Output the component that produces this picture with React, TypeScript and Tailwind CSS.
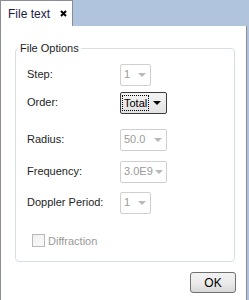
import React from 'react';

const font = { fontFamily: '"Liberation Sans", Arial, sans-serif' };

type ComboProps = {
  value: string;
  width: string;
  disabled?: boolean;
};

const Combo = ({ value, width, disabled }: ComboProps) => {
  if (disabled) {
    return (
      <div
        className={`${width} h-[22px] flex items-center justify-between pl-[3px] pr-[4px] border border-[#d0d0d0] bg-white text-[#9a9a9a] rounded-[2px]`}
      >
        <span>{value}</span>
        <svg width="8" height="4" viewBox="0 0 8 4" className="shrink-0 ml-[2px]">
          <path d="M0 0 H8 L4 4 Z" fill="#b8b8b8" />
        </svg>
      </div>
    );
  }
  return (
    <div
      className={`${width} h-[22px] flex items-center justify-between pl-[2px] pr-[5px] border border-[#3c3c3c] bg-gradient-to-b from-[#f4f4f4] to-[#e2e2e2] text-black rounded-[2px]`}
    >
      <span className="outline outline-1 outline-dotted outline-black leading-[14px] px-[1px]">{value}</span>
      <svg width="8" height="4" viewBox="0 0 8 4" className="shrink-0">
        <path d="M0 0 H8 L4 4 Z" fill="#000" />
      </svg>
    </div>
  );
};

const Row = ({ label, children, className }: { label: string; children: React.ReactNode; className?: string }) => (
  <div className={`flex items-center ${className ?? ''}`}>
    <span className="w-[93px] text-[#1e1e1e] whitespace-nowrap">{label}</span>
    {children}
  </div>
);

export default function App() {
  return (
    <div className="w-[249px] h-[300px] bg-[#b0c4de] text-[11px] relative overflow-hidden" style={font}>
      {/* tab strip */}
      <div className="h-[26px] flex items-end">
        <div className="w-[73px] h-[26px] bg-white border-l border-t border-r border-[#8c8c96] flex items-center pl-[7px] gap-[10px] text-[#1a1a46] text-[12px] whitespace-nowrap">
          <span>File text</span>
          <svg width="7" height="7" viewBox="0 0 7 7">
            <path d="M1 1 L6 6 M6 1 L1 6" stroke="#000" strokeWidth="2" />
          </svg>
        </div>
      </div>
      {/* body */}
      <div className="w-[247px] h-[274px] bg-white border-l border-r border-[#8c8c96] flex flex-col">
        <fieldset className="mt-[14px] ml-[14px] w-[220px] h-[222px] border border-[#d5dfe5] rounded-[4px] px-0 pt-0">
          <legend className="px-[2px] ml-[2px] text-[#1e1e1e] text-[11px]">File Options</legend>
          <div className="flex flex-col px-[11px]">
            <Row label="Step:" className="mt-[7px]">
              <Combo value="1" width="w-[31px]" disabled />
            </Row>
            <Row label="Order:" className="mt-[6px]">
              <Combo value="Total" width="w-[47px]" />
            </Row>
            <Row label="Radius:" className="mt-[15px]">
              <Combo value="50.0" width="w-[47px]" disabled />
            </Row>
            <Row label="Frequency:" className="mt-[10px]">
              <Combo value="3.0E9" width="w-[47px]" disabled />
            </Row>
            <Row label="Doppler Period:" className="mt-[9px]">
              <Combo value="1" width="w-[31px]" disabled />
            </Row>
            <div className="flex items-center mt-[19px] ml-[5px] gap-[3px] text-[#9a9a9a]">
              <div className="w-[13px] h-[13px] border border-[#b8b8b8] bg-gradient-to-br from-[#f0f0f0] to-[#fbfbfb]" />
              <span>Diffraction</span>
            </div>
          </div>
        </fieldset>
        <div className="flex justify-end mt-[10px] pr-[10px]">
          <div className="w-[46px] h-[21px] border border-[#707070] rounded-[3px] bg-gradient-to-b from-[#f2f2f2] via-[#ebebeb] to-[#d8d8d8] flex items-center justify-center text-black text-[12px]">
            OK
          </div>
        </div>
      </div>
    </div>
  );
}
